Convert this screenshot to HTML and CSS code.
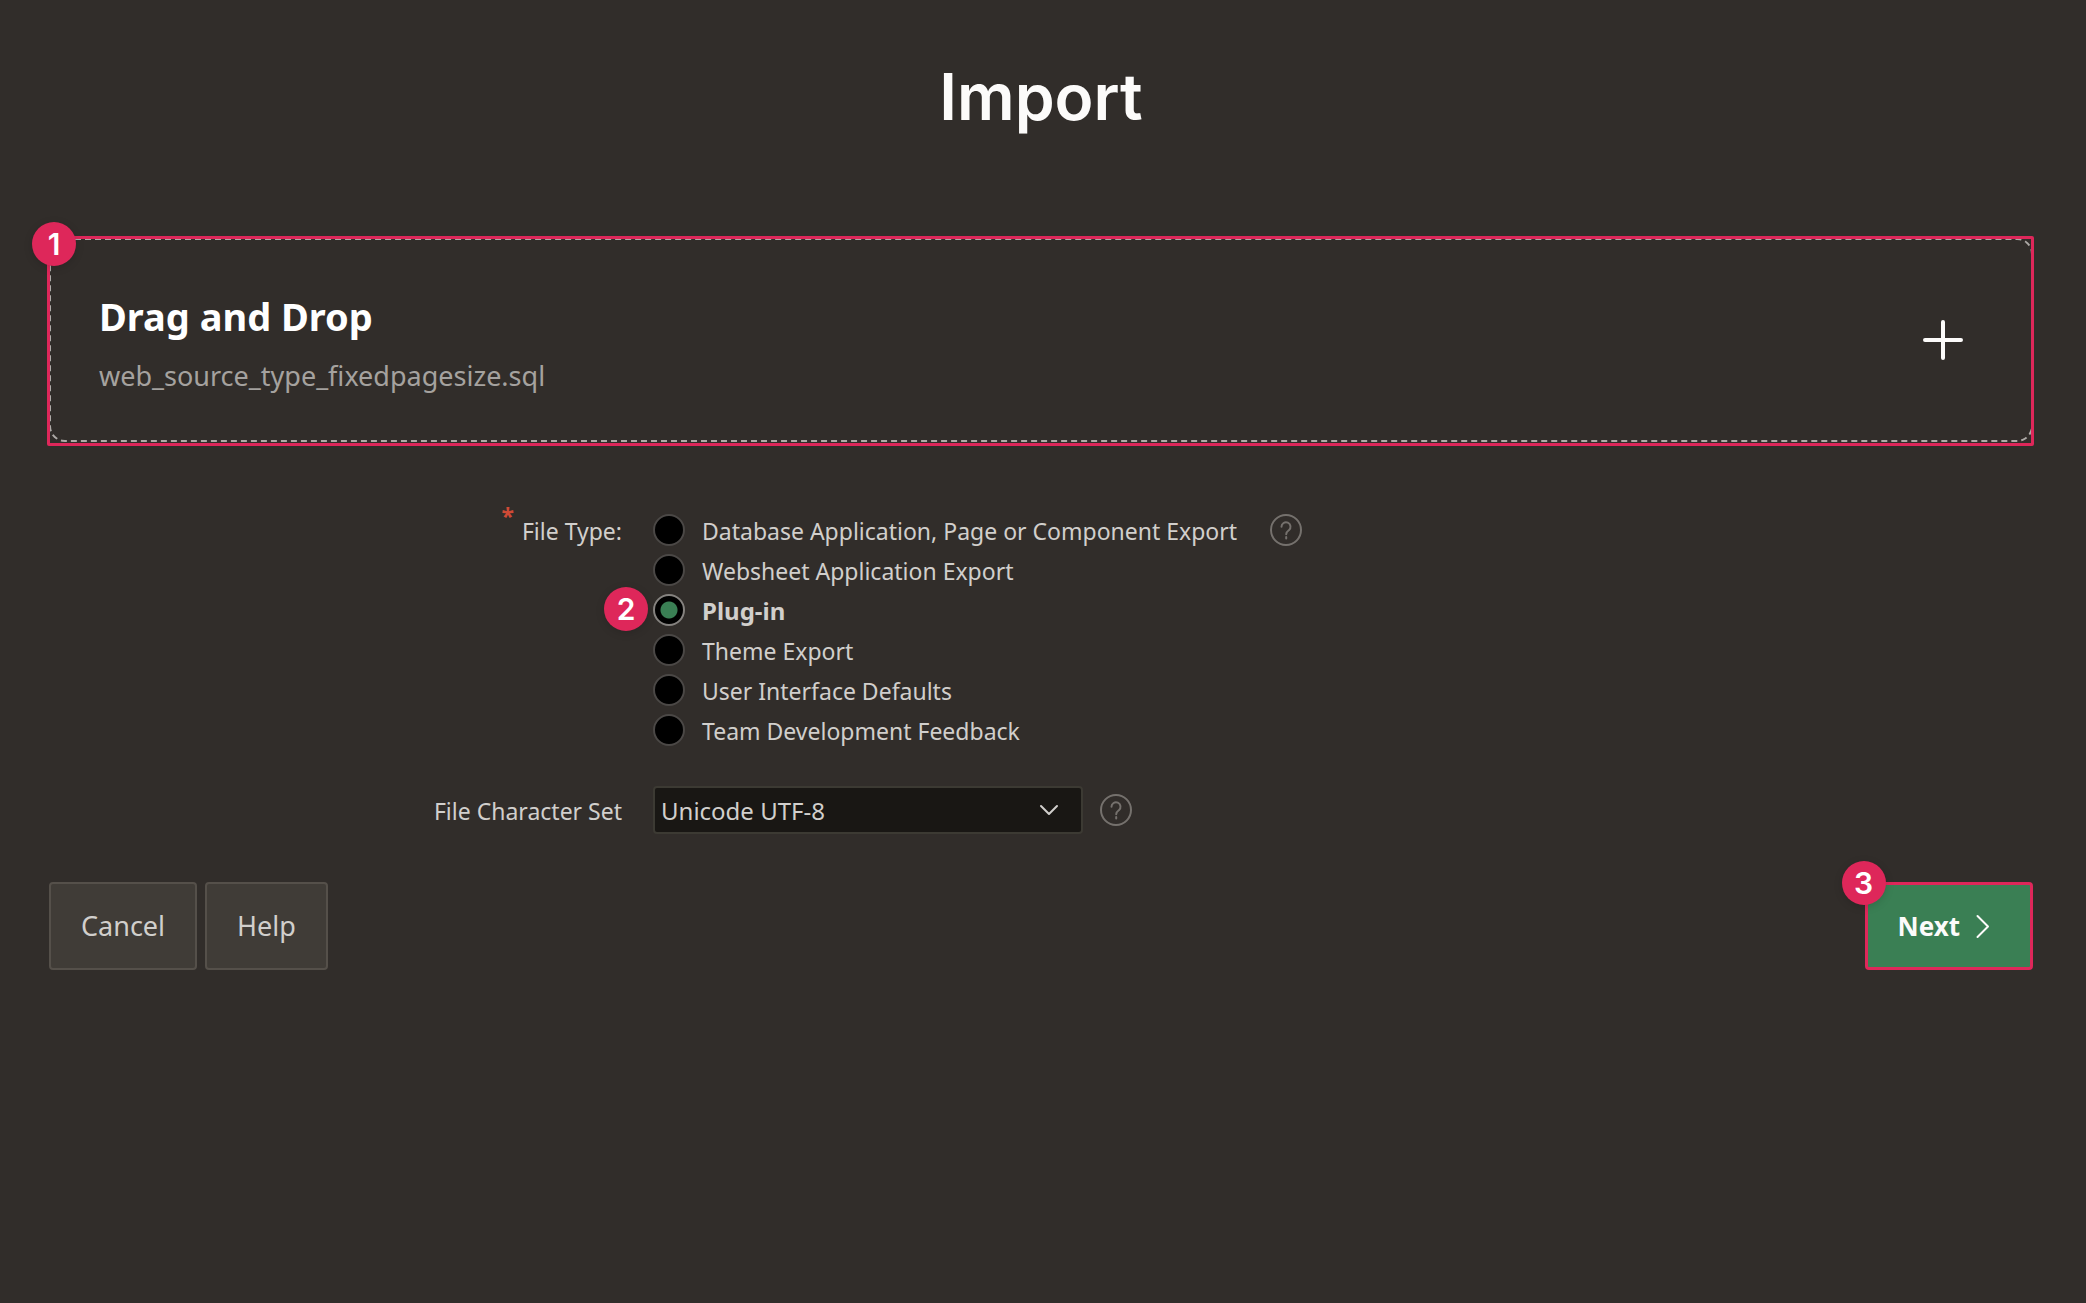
FILE: index.html
```
<!DOCTYPE html>
<html lang="en">
<head>
<meta charset="utf-8">
<title>Import</title>
<link rel="stylesheet" href="styles.css">
</head>
<body>
<main class="page">
  <h1 class="title">Import</h1>
  <form class="wizard">
    <section class="dropzone">
      <div class="dropzone-text">
        <h2 class="dropzone-heading">Drag and Drop</h2>
        <p class="dropzone-file">web_source_type_fixedpagesize.sql</p>
      </div>
      <button type="button" class="add" aria-label="Choose file">
        <svg width="48" height="48" viewBox="0 0 48 48"><path d="M24 6v36M6 24h36"/></svg>
      </button>
      <span class="callout"></span>
      <span class="badge badge-drop">1</span>
    </section>

    <div class="field field-type" role="radiogroup" aria-labelledby="type-label">
      <div class="field-label"><span class="required">*</span><span id="type-label" class="text">File Type:</span></div>
      <div class="options">
        <label class="option"><input type="radio" name="type" class="radio"><span class="text">Database Application, Page or Component Export</span></label>
        <label class="option"><input type="radio" name="type" class="radio"><span class="text">Websheet Application Export</span></label>
        <label class="option"><input type="radio" name="type" class="radio" checked><span class="text">Plug-in</span><span class="badge badge-option">2</span></label>
        <label class="option"><input type="radio" name="type" class="radio"><span class="text">Theme Export</span></label>
        <label class="option"><input type="radio" name="type" class="radio"><span class="text">User Interface Defaults</span></label>
        <label class="option"><input type="radio" name="type" class="radio"><span class="text">Team Development Feedback</span></label>
      </div>
      <button type="button" class="hint" aria-label="File type help">
        <svg width="32" height="32" viewBox="0 0 32 32"><circle cx="16" cy="16" r="15"/><path d="M11.500 12.800a4.500 4.500 0 1 1 7.400 3.400c-1.700 1.300-2.700 2-2.700 4"/><path d="M16.200 23v1.600"/></svg>
      </button>
    </div>

    <div class="field field-charset">
      <div class="field-label"><label for="charset" class="text">File Character Set</label></div>
      <div class="select-box">
        <select id="charset" class="select"><option>Unicode UTF-8</option></select>
        <svg class="select-arrow" width="20" height="12" viewBox="0 0 20 12"><path d="M2 2l8 8 8-8"/></svg>
      </div>
      <button type="button" class="hint" aria-label="Character set help">
        <svg width="32" height="32" viewBox="0 0 32 32"><circle cx="16" cy="16" r="15"/><path d="M11.500 12.800a4.500 4.500 0 1 1 7.400 3.400c-1.700 1.300-2.700 2-2.700 4"/><path d="M16.200 23v1.600"/></svg>
      </button>
    </div>

    <div class="actions">
      <button type="button" class="button">Cancel</button>
      <button type="button" class="button">Help</button>
      <div class="next-box">
        <button type="submit" class="button button-next">Next<svg width="32" height="32" viewBox="0 0 32 32"><path d="M11.500 6l10.500 10.500-10.500 10.500"/></svg></button>
        <span class="badge badge-next">3</span>
      </div>
    </div>
  </form>
</main>
</body>
</html>
```
FILE: styles.css
```
* { box-sizing: border-box; }

body {
  margin: 0;
  background: #312d2a;
  color: #d1cfcc;
  font: 23px/40px "Noto Sans", sans-serif;
}

.page { padding: 57px 53px 57px 49px; }

.title {
  margin: 0 0 101px;
  color: #fcfbfa;
  font: 600 64px/80px Inter, sans-serif;
  text-align: center;
}

button {
  padding: 0;
  border: 0;
  background: none;
  color: inherit;
  font: inherit;
}

svg {
  display: block;
  fill: none;
  stroke: currentColor;
  stroke-width: 2;
  stroke-linecap: round;
  stroke-linejoin: round;
}

.dropzone {
  position: relative;
  display: flex;
  align-items: center;
  justify-content: space-between;
  padding: 44px 64px 44px 48px;
  border: 2px dashed #aeaaa7;
  border-radius: 16px;
}

.dropzone-text { padding-top: 8px; }

.dropzone-heading {
  margin: 0 0 16px;
  color: #fff;
  font-size: 38px;
  line-height: 48px;
}

.dropzone-file {
  margin: 0;
  color: #a5a29f;
  font-size: 27px;
}

.add { color: #fcfbfa; }
.add svg { stroke-width: 4; }

.callout {
  position: absolute;
  inset: -4px -3px -6px -4px;
  border: 3px solid #de275a;
  border-radius: 2px;
  pointer-events: none;
}

.badge {
  position: absolute;
  width: 44px;
  height: 44px;
  border-radius: 50%;
  background: #de275a;
  box-shadow: 0 2px 8px rgba(0, 0, 0, .15);
  color: #fff;
  font: 600 30px/44px Inter, sans-serif;
  text-align: center;
}

.badge-drop { top: -18px; left: -19px; }
.badge-option { top: -3px; left: -49px; }
.badge-next { top: -21px; left: -23px; }

.field { display: flex; }
.field-type { margin-top: 68px; }
.field-charset { align-items: center; margin-top: 36px; }

.field-label {
  display: flex;
  flex: 0 0 604px;
  justify-content: flex-end;
  gap: 8px;
  padding-right: 31px;
}

.text { padding-top: 1px; }

.required {
  color: #cf4a36;
  font-weight: 700;
  line-height: 12px;
}

.option {
  position: relative;
  display: flex;
  align-items: center;
  gap: 17px;
  height: 40px;
}

.radio {
  appearance: none;
  width: 32px;
  height: 32px;
  margin: 0;
  border: 2px solid #4b4846;
  border-radius: 50%;
  background: #000;
}

.radio:checked {
  border-color: #85827f;
  background: radial-gradient(circle, #3a7f54 8px, #000 9px);
}

.radio:checked + .text {
  font-size: 24px;
  font-weight: 700;
}

.hint { color: #75716d; }
.field-type .hint { align-self: flex-start; margin: 4px 0 0 33px; }
.field-charset .hint { margin-left: 17px; }

.select-box {
  display: grid;
  align-items: center;
  width: 430px;
}

.select {
  grid-area: 1 / 1;
  appearance: none;
  width: 100%;
  height: 48px;
  padding: 1px 48px 0 6px;
  border: 2px solid #3c3a33;
  border-radius: 4px;
  background: #191714;
  color: #d1cfcc;
  font: inherit;
  font-size: 24px;
}

.select-arrow {
  grid-area: 1 / 1;
  justify-self: end;
  margin-right: 24px;
  pointer-events: none;
}

.actions {
  display: flex;
  gap: 8px;
  margin-top: 48px;
}

.button {
  height: 88px;
  padding: 0 30px;
  border: 2px solid #55504a;
  border-radius: 4px;
  background: #403c37;
  font-size: 27px;
}

.next-box {
  position: relative;
  margin-left: auto;
}

.button-next {
  display: flex;
  align-items: center;
  gap: 6px;
  padding: 0 32px 0 30px;
  border: 3px solid #de275a;
  background: #3a7f54;
  color: #fcfbfa;
  font-size: 26px;
  font-weight: 700;
}
```
